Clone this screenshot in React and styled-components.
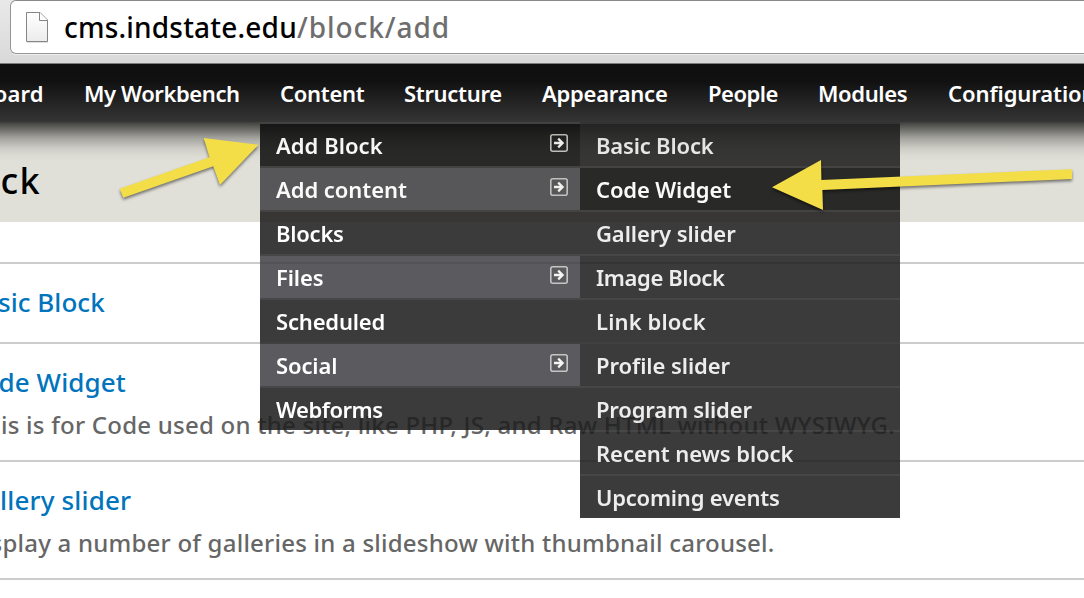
import React from 'react';
import styled, { createGlobalStyle } from 'styled-components';

const GlobalStyle = createGlobalStyle`
  * { box-sizing: border-box; }
  body {
    margin: 0;
    background: #fff;
    font-family: "Noto Sans", "Open Sans", sans-serif;
    font-weight: 500;
  }
`;

const Page = styled.div`
  position: relative;
  width: 1084px;
  height: 598px;
  overflow: hidden;
  white-space: nowrap;
`;

const Chrome = styled.header`
  height: 64px;
  padding-left: 10px;
  background: linear-gradient(#e9e9e9, #d9d9d9);
  border-bottom: 1px solid #7c7c7c;
`;

const AddressBar = styled.div`
  display: flex;
  align-items: center;
  width: 1090px;
  height: 54px;
  padding-left: 15px;
  background: #fff;
  border: 1px solid #959595;
  border-top-color: #8a8a8a;
  border-radius: 6px;
  box-shadow: 0 1px 0 #efefef;
`;

const Address = styled.div`
  margin-left: 14px;
  font-size: 28px;
  line-height: 52px;
  color: #000;
  letter-spacing: 0.2px;
`;

const AddressPath = styled.span`
  color: #6e6e6e;
  letter-spacing: 0.95px;
`;

const AdminBar = styled.nav`
  display: flex;
  gap: 40px;
  height: 58px;
  margin-left: -75px;
  background: linear-gradient(#0f0f0f 0%, #111 30%, #353535 100%);
`;

const AdminLink = styled.a`
  flex: none;
  width: ${(p) => p.$width}px;
  font-size: 22px;
  font-weight: 600;
  line-height: 59px;
  letter-spacing: ${(p) => p.$track}px;
  color: #fff;
`;

const TitleBand = styled.div`
  height: 100px;
  padding-top: 16px;
  background:
    linear-gradient(
      rgba(0, 0, 0, 0.72) 0,
      rgba(0, 0, 0, 0.5) 8px,
      rgba(0, 0, 0, 0.27) 16px,
      rgba(0, 0, 0, 0.09) 26px,
      rgba(0, 0, 0, 0.02) 34px,
      rgba(0, 0, 0, 0) 40px
    ),
    #e0dfd8;
`;

const Title = styled.h1`
  display: flex;
  justify-content: flex-end;
  width: 41px;
  margin: 0;
  font-size: 36px;
  font-weight: 500;
  line-height: 85px;
  letter-spacing: 1.4px;
  color: #000;
`;

const BlockList = styled.ul`
  margin: 40px 0 0;
  padding: 0;
  list-style: none;
  border-top: 2px solid #ccc;
`;

const BlockItem = styled.li`
  padding: 18px 0 20px;
  margin-left: -34px;
  border-bottom: 2px solid #ccc;
`;

const BlockLink = styled.a`
  display: block;
  font-size: 26px;
  line-height: 40px;
  letter-spacing: ${(p) => p.$track}px;
  color: #0074bd;
`;

const BlockText = styled.p`
  margin: 0 0 -8px;
  padding-left: ${(p) => p.$indent}px;
  font-size: 24px;
  line-height: 46px;
  letter-spacing: ${(p) => p.$track}px;
  color: #666;
`;

const Flyout = styled.div`
  position: absolute;
  top: 122px;
  left: 260px;
  display: flex;
  align-items: flex-start;
`;

const Menu = styled.ul`
  width: 320px;
  margin: 0;
  padding: 0;
  list-style: none;
  opacity: 0.87;
`;

const rowTone = {
  plain: '#1e1e1e',
  active: '#0f0f0f',
  parent: '#434247',
};

const MenuRow = styled.li`
  display: flex;
  justify-content: space-between;
  height: 44px;
  padding: 0 12px 0 16px;
  border-top: 2px solid ${(p) => p.$edge || '#2c2c2c'};
  background: ${(p) => rowTone[p.$tone]};
  font-size: 22px;
  font-weight: 600;
  line-height: 43px;
  letter-spacing: ${(p) => p.$track}px;
  color: ${(p) => (p.$dim ? '#ebebeb' : '#fff')};
`;

const ExpandIcon = styled.svg`
  width: 18px;
  height: 18px;
  margin-top: 10px;
`;

const Annotations = styled.svg`
  position: absolute;
  top: 0;
  left: 0;
  width: 1084px;
  height: 598px;
  pointer-events: none;
  filter: drop-shadow(0 2px 1.5px rgba(0, 0, 0, 0.5));
`;

const adminLinks = [
  ['Dashboard', 119, 0.2],
  ['My Workbench', 156, -0.4],
  ['Content', 84, -0.3],
  ['Structure', 98, -0.32],
  ['Appearance', 126, -0.25],
  ['People', 70, -0.5],
  ['Modules', 90, -0.37],
  ['Configuration', 148, -0.08],
];

const contentMenu = [
  ['Add Block', 0.03, 'active', true],
  ['Add content', -0.05, 'parent', true],
  ['Blocks', -0.24, 'plain', false],
  ['Files', -0.1, 'parent', true],
  ['Scheduled', -0.18, 'plain', false],
  ['Social', -0.12, 'parent', true],
  ['Webforms', -0.48, 'plain', false],
];

const blockMenu = [
  ['Basic Block', -0.18],
  ['Code Widget', -0.14],
  ['Gallery slider', -0.1],
  ['Image Block', -0.38],
  ['Link block', 0.12],
  ['Profile slider', -0.06],
  ['Program slider', -0.18],
  ['Recent news block', -0.06],
  ['Upcoming events', -0.22],
];

const blocks = [
  { name: 'Basic Block', track: 0.04 },
  {
    name: 'Code Widget',
    track: 0.08,
    text: 'This is for Code used on the site, like PHP, JS, and Raw HTML without WYSIWYG.',
    textTrack: 0.24,
    indent: 6,
  },
  {
    name: 'Gallery slider',
    track: 0.16,
    text: 'Display a number of galleries in a slideshow with thumbnail carousel.',
    textTrack: 0.23,
    indent: 0,
  },
];

function PageIcon() {
  return (
    <svg width="24" height="32" viewBox="0 0 24 32">
      <defs>
        <linearGradient id="paper" x1="0" y1="0" x2="0" y2="1">
          <stop offset="0" stopColor="#fff" />
          <stop offset="1" stopColor="#ececec" />
        </linearGradient>
      </defs>
      <path d="M0.5 1.5H14L21.5 9V30.5H0.5Z" fill="url(#paper)" stroke="#858585" />
      <path d="M13.5 1.5V9.5H21.5" fill="#fff" stroke="#858585" />
      <path d="M1 31.5H22" stroke="#000" strokeOpacity=".12" />
    </svg>
  );
}

function Expand() {
  return (
    <ExpandIcon viewBox="0 0 18 18" fill="none">
      <rect x="0.8" y="0.8" width="16.4" height="16.4" rx="2" stroke="#bdbdb9" strokeWidth="1.6" />
      <path d="M4 9H12.4M8.2 4.6L12.6 9L8.2 13.4" stroke="#f4f4f2" strokeWidth="2.3" />
    </ExpandIcon>
  );
}

export default function App() {
  return (
    <Page>
      <GlobalStyle />
      <Chrome>
        <AddressBar>
          <PageIcon />
          <Address>
            cms.indstate.edu<AddressPath>/block/add</AddressPath>
          </Address>
        </AddressBar>
      </Chrome>
      <AdminBar>
        {adminLinks.map(([label, width, track]) => (
          <AdminLink key={label} $width={width} $track={track}>{label}</AdminLink>
        ))}
      </AdminBar>
      <TitleBand>
        <Title>Add Block</Title>
      </TitleBand>
      <BlockList>
        {blocks.map((b) => (
          <BlockItem key={b.name}>
            <BlockLink $track={b.track}>{b.name}</BlockLink>
            {b.text && <BlockText $track={b.textTrack} $indent={b.indent}>{b.text}</BlockText>}
          </BlockItem>
        ))}
      </BlockList>
      <Flyout>
        <Menu>
          {contentMenu.map(([label, track, tone, expands], i) => (
            <MenuRow key={label} $track={track} $tone={tone} $edge={i === 0 ? '#424242' : undefined}>
              {label}
              {expands && <Expand />}
            </MenuRow>
          ))}
        </Menu>
        <Menu>
          {blockMenu.map(([label, track], i) => (
            <MenuRow
              key={label}
              $track={track}
              $tone={label === 'Code Widget' ? 'active' : 'plain'}
              $dim={label !== 'Code Widget'}
              $edge={i === 0 ? '#323232' : undefined}
            >
              {label}
            </MenuRow>
          ))}
        </Menu>
      </Flyout>
      <Annotations viewBox="0 0 1084 598" fill="#f3de48">
        <path d="M119.7 188.7L209.5 157.3L203.7 138L258.5 144.7L220 185L213.3 166.2L123.3 197.8Z" />
        <path d="M772 187.3L821 160L821.4 180L1072 169.2V179L822.4 190L823 210Z" />
      </Annotations>
    </Page>
  );
}
